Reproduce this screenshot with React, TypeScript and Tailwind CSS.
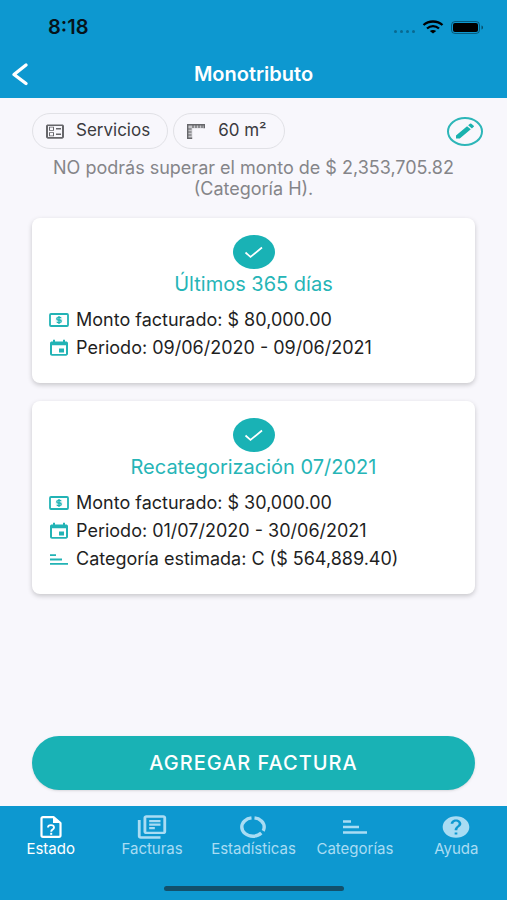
import type { ReactNode } from "react";
import {
  MdEdit,
  MdEvent,
  MdHelp,
  MdOutlineBallot,
  MdOutlineLibraryBooks,
} from "react-icons/md";

type IconProps = {
  className?: string;
};

function BackIcon({ className }: IconProps) {
  return (
    <svg viewBox="0 0 18 24" fill="none" className={className} aria-hidden="true">
      <path d="M15 3 3 12.500l12 9" stroke="currentColor" strokeWidth="3.400" strokeLinecap="round" strokeLinejoin="round" />
    </svg>
  );
}

function WifiIcon({ className }: IconProps) {
  return (
    <svg viewBox="0 0 22 14" fill="none" className={className} aria-hidden="true">
      <path d="M1.500 5C6.700.3 15.300.3 20.500 5M5 8.500C8.500 5.400 13.500 5.400 17 8.500" stroke="currentColor" strokeWidth="2.300" />
      <path d="M11 13.500 7.800 11c1.900-1.500 4.500-1.500 6.400 0z" fill="currentColor" />
    </svg>
  );
}

function BatteryIcon({ className }: IconProps) {
  return (
    <svg viewBox="0 0 34 13" fill="none" className={className} aria-hidden="true">
      <rect x="0.500" y="0.500" width="28" height="12" rx="3.500" stroke="currentColor" opacity="0.400" />
      <rect x="2" y="2" width="25" height="9" rx="2" fill="currentColor" />
      <path d="M30.500 4.500c2 .500 2 3.500 0 4z" fill="currentColor" opacity="0.500" />
    </svg>
  );
}

function RulerIcon({ className }: IconProps) {
  return (
    <svg viewBox="0 0 18 15" fill="none" className={className} aria-hidden="true">
      <path d="M.7.7h16.600v3.600H5.200v10H.7z" fill="currentColor" fillOpacity="0.350" />
      <path d="M17.300 4.300V.7H.7v13.600h4.500" stroke="currentColor" strokeWidth="1.400" />
      <path d="M6 1v3M9 1v3M12 1v3M15 1v3M1 5h3.500M1 8h3.500M1 11h3.500" stroke="currentColor" strokeWidth="1.200" />
    </svg>
  );
}

function MoneyIcon({ className }: IconProps) {
  return (
    <svg viewBox="0 0 20 14" fill="none" className={className} aria-hidden="true">
      <rect x="1" y="1" width="18" height="12" rx="1" stroke="currentColor" strokeWidth="1.800" />
      <ellipse cx="10" cy="7" rx="3.500" ry="4" fill="currentColor" opacity="0.150" />
      <path d="M12.200 4.700H9q-1.200 0-1.200 1.150T9 7h2q1.200 0 1.200 1.150T11 9.300H7.800M10 3v8" stroke="currentColor" strokeWidth="1.300" />
    </svg>
  );
}

function BarsIcon({ className }: IconProps) {
  return (
    <svg viewBox="0 0 24 14" fill="none" preserveAspectRatio="none" className={className} aria-hidden="true">
      <path d="M0 1.500h8M0 7h16M0 12.500h24" stroke="currentColor" strokeWidth="2.400" />
    </svg>
  );
}

function FileQuestionIcon({ className }: IconProps) {
  return (
    <svg viewBox="0 0 22 22" fill="none" className={className} aria-hidden="true">
      <path d="M3 1.200h10.500L20.500 7v12.500q0 1.300-1.500 1.300H3q-1.500 0-1.500-1.300v-17Q1.500 1.200 3 1.200z" stroke="currentColor" strokeWidth="2.200" strokeLinejoin="round" />
      <path d="M13 1.200V7h7.500z" fill="currentColor" />
      <path d="M8 11.500c0-3.200 6-3.200 6 0 0 2.200-2.800 2-2.800 4.200" stroke="currentColor" strokeWidth="1.900" />
      <path d="M10.200 16.800h2v2h-2z" fill="currentColor" />
    </svg>
  );
}

function RingIcon({ className }: IconProps) {
  return (
    <svg viewBox="0 0 26 22" fill="none" className={className} aria-hidden="true">
      <path
        d="M14.500 1.900C20 2.500 24.200 6.300 24.200 11q0 2-1 3.800M21.300 17.100C19.300 19 16.300 20.200 13 20.200 6.800 20.200 1.800 16.100 1.800 11c0-4.700 4.200-8.500 9.700-9.100"
        stroke="currentColor"
        strokeWidth="3.400"
      />
    </svg>
  );
}

function CheckBadge() {
  return (
    <svg viewBox="0 0 42 34" fill="none" className="h-[34px] w-[42px]" aria-hidden="true">
      <ellipse cx="21" cy="17" rx="21" ry="17" fill="#19b2b5" />
      <path d="m12.500 17.500 5 4.500L29 12.500" stroke="white" strokeWidth="1.700" />
    </svg>
  );
}

type Detail = {
  icon: ReactNode;
  text: string;
};

type StatusCardProps = {
  title: string;
  details: Detail[];
};

function StatusCard({ title, details }: StatusCardProps) {
  return (
    <section className="rounded-lg bg-white px-[17px] pt-[17px] pb-[21px] shadow-[0_2px_5px_rgba(0,0,0,0.2)]">
      <div className="flex flex-col items-center">
        <CheckBadge />
        <h2 className="text-[20px] leading-[30px] text-[#26b5b7]">{title}</h2>
      </div>
      <ul className="mt-[7px]">
        {details.map((detail) => (
          <li key={detail.text} className="flex items-center gap-[7px] text-[18px] leading-7 text-[#1f1f1f]">
            <span className="flex w-5 justify-center text-[#22b3b5]">{detail.icon}</span>
            {detail.text}
          </li>
        ))}
      </ul>
    </section>
  );
}

const money = <MoneyIcon className="h-[14px] w-5" />;
const calendar = <MdEvent preserveAspectRatio="none" className="h-[19px] w-6 shrink-0" />;
const bars = <BarsIcon className="h-[11px] w-[18px]" />;

const lastYear: Detail[] = [
  { icon: money, text: "Monto facturado: $ 80,000.00" },
  { icon: calendar, text: "Periodo: 09/06/2020 - 09/06/2021" },
];

const recategorization: Detail[] = [
  { icon: money, text: "Monto facturado: $ 30,000.00" },
  { icon: calendar, text: "Periodo: 01/07/2020 - 30/06/2021" },
  { icon: bars, text: "Categoría estimada: C ($ 564,889.40)" },
];

const tabs = [
  { label: "Estado", icon: <FileQuestionIcon className="h-[22px] w-[22px]" /> },
  { label: "Facturas", icon: <MdOutlineLibraryBooks preserveAspectRatio="none" className="h-7 w-[34px] shrink-0" /> },
  { label: "Estadísticas", icon: <RingIcon className="h-[22px] w-[26px]" /> },
  { label: "Categorías", icon: <BarsIcon className="h-[14px] w-6" /> },
  { label: "Ayuda", icon: <MdHelp preserveAspectRatio="none" className="h-[26px] w-8 shrink-0" /> },
];

export default function App() {
  return (
    <div className="flex min-h-screen flex-col bg-[#f8f7fc] font-['Inter',sans-serif]">
      <header className="bg-[#0d98d0]">
        <div className="flex h-[54px] items-center justify-between pr-[22px] pl-12">
          <span className="text-[20px] font-semibold text-[#06131a]">8:18</span>
          <div className="flex items-center gap-[7px] text-black">
            <span className="flex gap-[3px] pt-2 opacity-30">
              <i className="size-[3px] rounded-full bg-black" />
              <i className="size-[3px] rounded-full bg-black" />
              <i className="size-[3px] rounded-full bg-black" />
              <i className="size-[3px] rounded-full bg-black" />
            </span>
            <WifiIcon className="h-[14px] w-[22px]" />
            <BatteryIcon className="h-[13px] w-[34px]" />
          </div>
        </div>
        <div className="grid h-11 grid-cols-[1fr_auto_1fr] items-center px-[11px] pb-1">
          <button type="button" aria-label="Volver" className="justify-self-start text-white">
            <BackIcon className="h-6 w-[18px]" />
          </button>
          <h1 className="text-[20px] font-semibold text-white">Monotributo</h1>
        </div>
      </header>

      <main className="flex flex-1 flex-col px-8 pt-[15px] pb-4">
        <div className="-mr-2 flex items-center gap-[5px]">
          <span className="flex h-9 items-center gap-[9px] rounded-full border border-[#e1e1e6] pr-[17px] pl-[10px] text-[17px] text-[#3b3b3f]">
            <span className="flex w-6 justify-center text-[#66666a]">
              <MdOutlineBallot preserveAspectRatio="none" className="h-[19px] w-6" />
            </span>
            Servicios
          </span>
          <span className="flex h-9 items-center gap-[13px] rounded-full border border-[#e1e1e6] pr-[17px] pl-[13px] text-[17px] text-[#3b3b3f]">
            <RulerIcon className="h-[15px] w-[18px] text-[#66666a]" />
            60 m²
          </span>
          <button
            type="button"
            aria-label="Editar"
            className="ml-auto flex h-[29px] w-9 items-center justify-center rounded-[50%] border-2 border-[#2db6b8] text-[#19b2ae]"
          >
            <MdEdit preserveAspectRatio="none" className="h-5 w-6" />
          </button>
        </div>

        <p className="-mx-2 mt-2 text-center text-[18px] leading-[21px] text-[#858589]">
          NO podrás superar el monto de $ 2,353,705.82
          <br />
          (Categoría H).
        </p>

        <div className="mt-[19px] flex flex-col gap-[18px]">
          <StatusCard title="Últimos 365 días" details={lastYear} />
          <StatusCard title="Recategorización 07/2021" details={recategorization} />
        </div>

        <button
          type="button"
          className="mt-auto h-[54px] rounded-full bg-[#19b2b5] text-[20px] font-medium tracking-wider text-white shadow-sm"
        >
          AGREGAR FACTURA
        </button>
      </main>

      <nav className="bg-[#0d98d0] pt-2">
        <ul className="grid grid-cols-5">
          {tabs.map((tab, index) => (
            <li key={tab.label}>
              <a
                href="#"
                aria-current={index === 0 ? "page" : undefined}
                className={`flex flex-col items-center text-[15px] leading-5 ${index === 0 ? "text-white" : "text-[#a9dcf3]"}`}
              >
                <span className="flex h-[25px] items-center">{tab.icon}</span>
                {tab.label}
              </a>
            </li>
          ))}
        </ul>
        <div className="mx-auto mt-[27px] mb-[9px] h-[5px] w-[180px] rounded-full bg-[#12506b]" />
      </nav>
    </div>
  );
}
